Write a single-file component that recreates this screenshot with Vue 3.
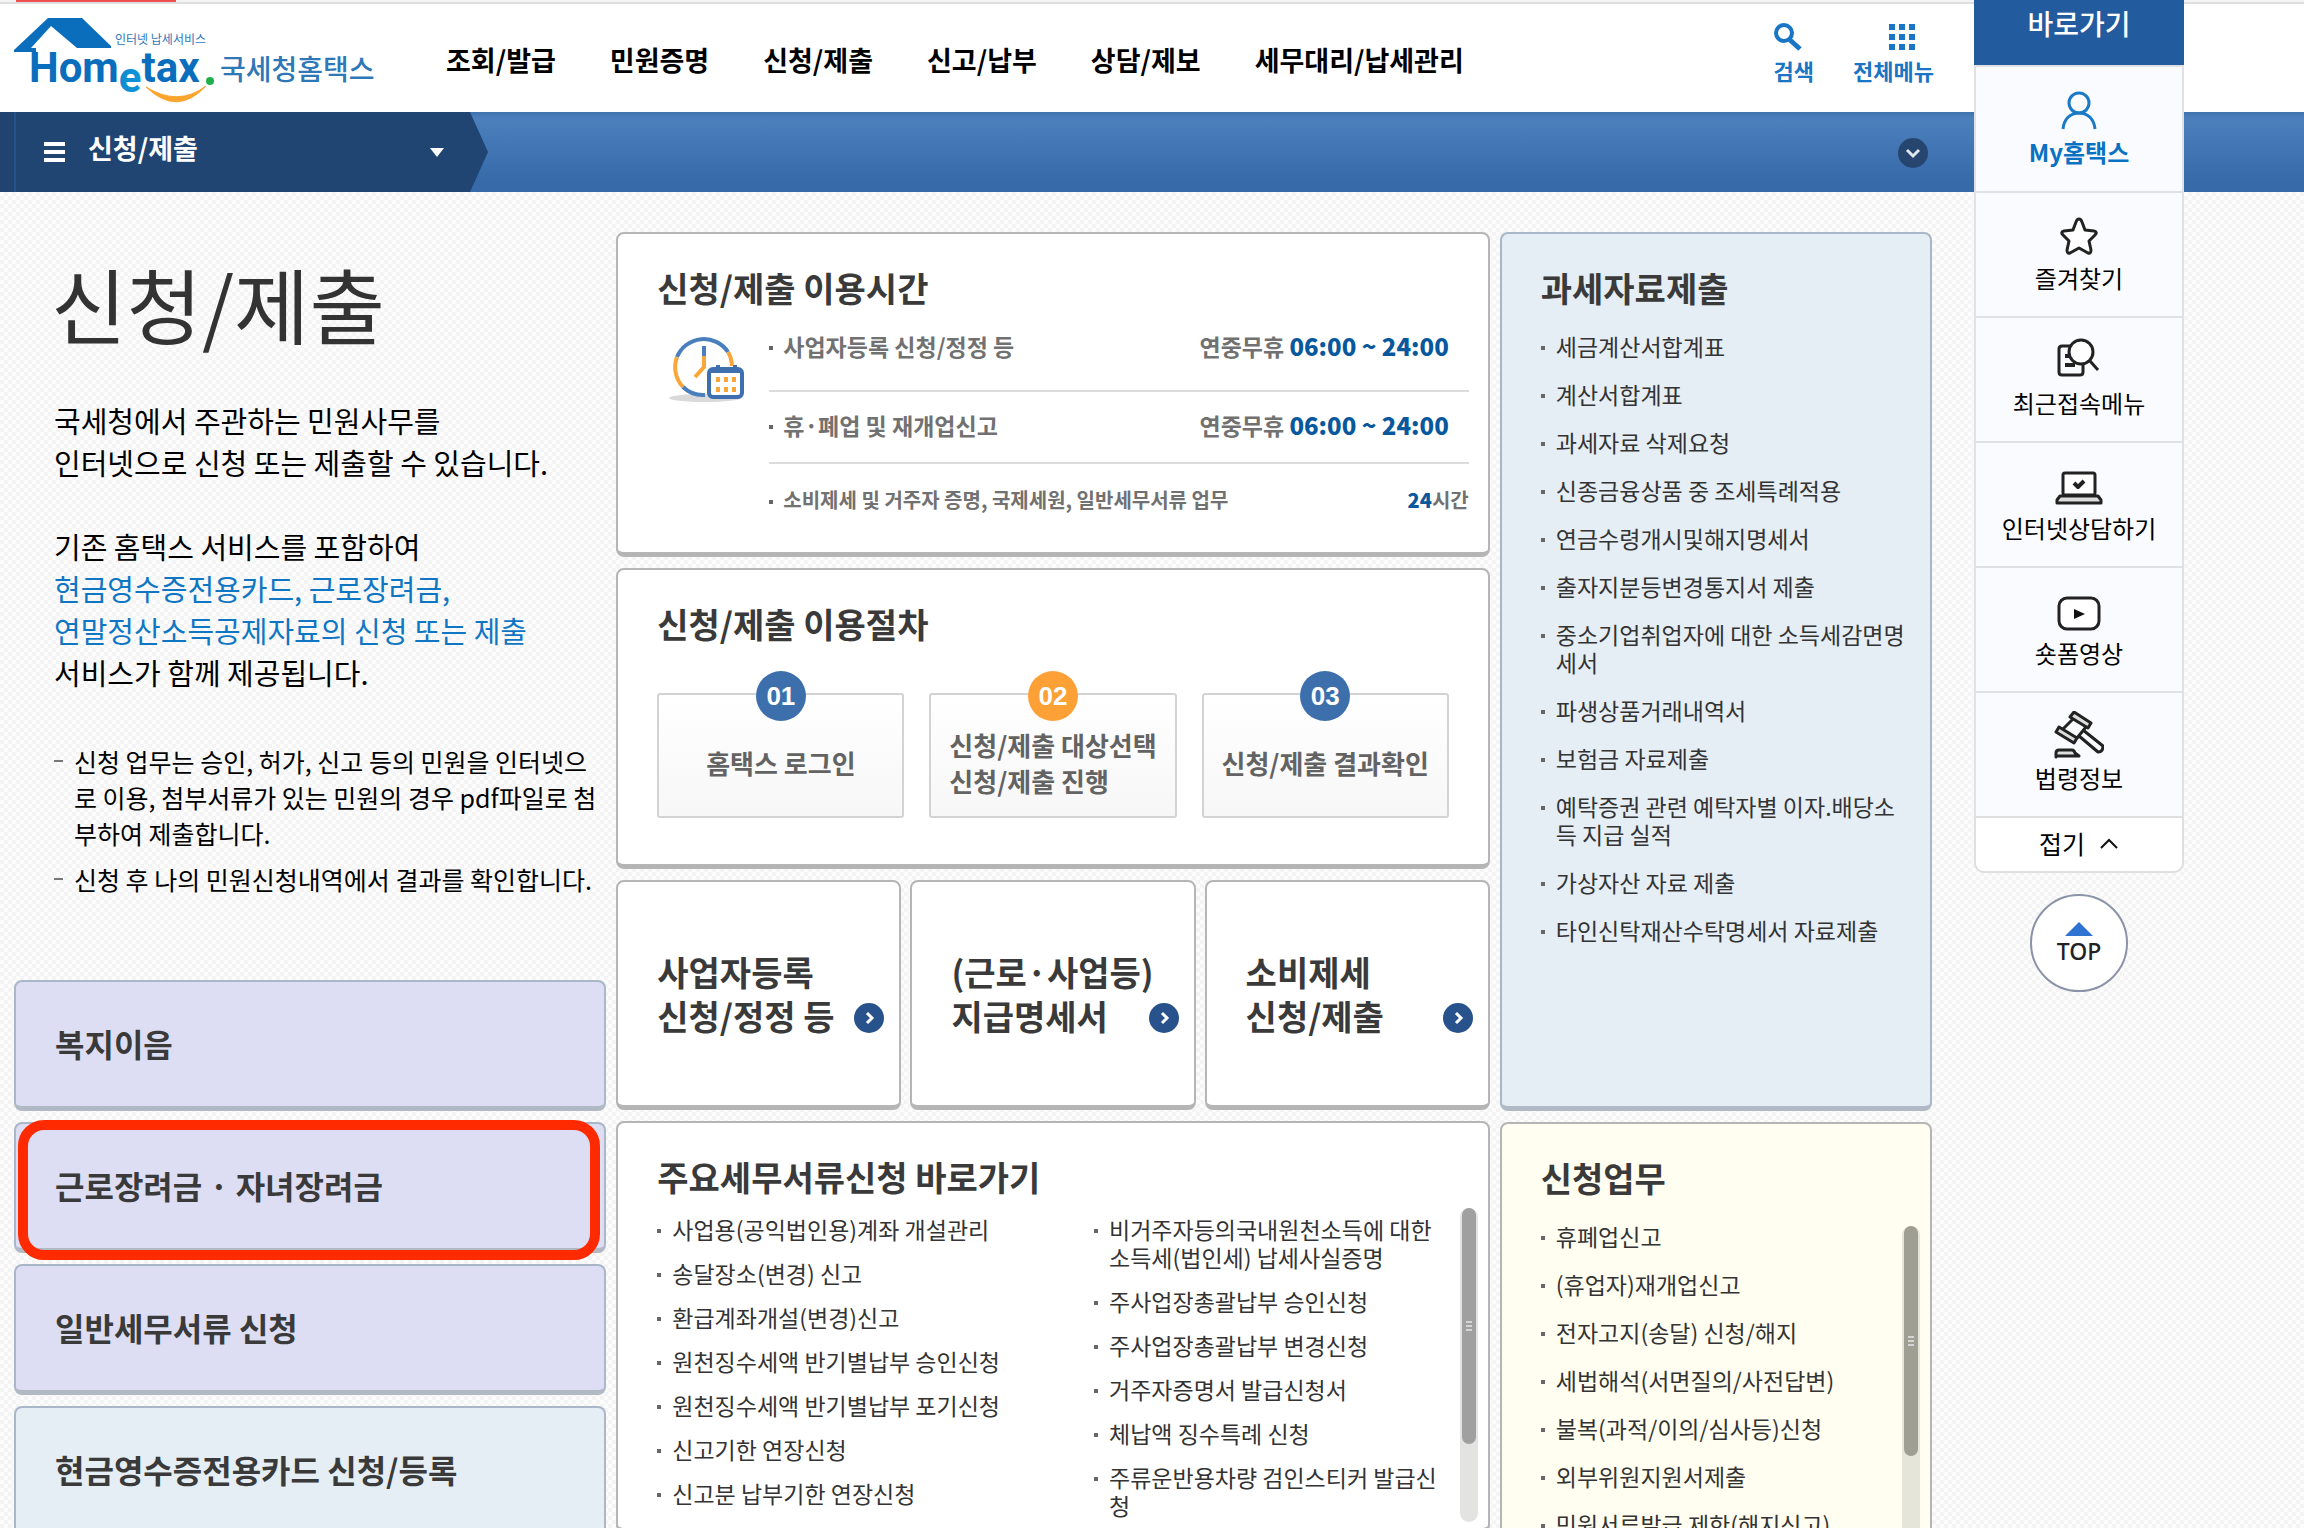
<script setup>
const nav = ['조회/발급', '민원증명', '신청/제출', '신고/납부', '상담/제보', '세무대리/납세관리']
const notes = [
  '신청 업무는 승인, 허가, 신고 등의 민원을 인터넷으로 이용, 첨부서류가 있는 민원의 경우 pdf파일로 첨부하여 제출합니다.',
  '신청 후 나의 민원신청내역에서 결과를 확인합니다.'
]
const shortcuts = [
  { label: '복지이음', tone: 'violet' },
  { label: '근로장려금 · 자녀장려금', tone: 'violet', marked: true },
  { label: '일반세무서류 신청', tone: 'violet' },
  { label: '현금영수증전용카드 신청/등록', tone: 'sky' }
]
const hours = [
  { name: '사업자등록 신청/정정 등', pre: '연중무휴 ', time: '06:00 ~ 24:00', post: '' },
  { name: '휴·폐업 및 재개업신고', pre: '연중무휴 ', time: '06:00 ~ 24:00', post: '' },
  { name: '소비제세 및 거주자 증명, 국제세원, 일반세무서류 업무', pre: '', time: '24', post: '시간', compact: true }
]
const steps = [
  { no: '01', lines: ['홈택스 로그인'] },
  { no: '02', lines: ['신청/제출 대상선택', '신청/제출 진행'], accent: true },
  { no: '03', lines: ['신청/제출 결과확인'] }
]
const tiles = [
  ['사업자등록', '신청/정정 등'],
  ['(근로·사업등)', '지급명세서'],
  ['소비제세', '신청/제출']
]
const docsLeft = ['사업용(공익법인용)계좌 개설관리', '송달장소(변경) 신고', '환급계좌개설(변경)신고', '원천징수세액 반기별납부 승인신청', '원천징수세액 반기별납부 포기신청', '신고기한 연장신청', '신고분 납부기한 연장신청']
const docsRight = ['비거주자등의국내원천소득에 대한 소득세(법인세) 납세사실증명', '주사업장총괄납부 승인신청', '주사업장총괄납부 변경신청', '거주자증명서 발급신청서', '체납액 징수특례 신청', '주류운반용차량 검인스티커 발급신청']
const taxData = ['세금계산서합계표', '계산서합계표', '과세자료 삭제요청', '신종금융상품 중 조세특례적용', '연금수령개시및해지명세서', '출자지분등변경통지서 제출', '중소기업취업자에 대한 소득세감면명세서', '파생상품거래내역서', '보험금 자료제출', '예탁증권 관련 예탁자별 이자.배당소득 지급 실적', '가상자산 자료 제출', '타인신탁재산수탁명세서 자료제출']
const tasks = ['휴폐업신고', '(휴업자)재개업신고', '전자고지(송달) 신청/해지', '세법해석(서면질의/사전답변)', '불복(과적/이의/심사등)신청', '외부위원지원서제출', '민원서류발급 제한(해지신고)']
</script>

<template>
  <div class="page">
    <div class="strip"><span class="strip-mark"></span></div>

    <header class="header">
      <a class="logo" href="#" aria-label="Hometax 국세청홈택스">
        <svg width="360" height="92" viewBox="14 16 360 92">
          <defs>
            <linearGradient id="e" x1="0" x2="1" y1="0" y2="0">
              <stop offset="0.2" stop-color="#0a6ebd" />
              <stop offset="1" stop-color="#12b5ee" />
            </linearGradient>
          </defs>
          <path d="M48 18H82L111 46V48H77L51 26L31 48H36V52H14V50Z" fill="#0a6ebd" />
          <text x="29" y="82" class="lg-main">Hom<tspan dy="10" fill="#1190d6">e</tspan><tspan dy="-10">tax</tspan></text>
          <circle cx="210" cy="81" r="4" fill="#1fb04c" />
          <path d="M146 87Q177 117 206 86Q178 107 146 87Z" fill="#fba52f" stroke="#fba52f" />
          <text x="115" y="44" class="lg-sub">인터넷 납세서비스</text>
          <text x="220" y="80" class="lg-ko">국세청홈택스</text>
        </svg>
      </a>
      <nav class="nav">
        <a v-for="n in nav" :key="n" href="#">{{ n }}</a>
      </nav>
      <div class="tools">
        <button type="button">
          <svg width="28" height="28" viewBox="0 0 28 28" fill="none" stroke="#1a75c4"><circle cx="10" cy="10" r="8" stroke-width="4" /><path d="M16 17L26 26" stroke-width="5" /></svg>
          <span>검색</span>
        </button>
        <button type="button" class="all">
          <svg width="28" height="28" viewBox="0 0 28 28" fill="#1a75c4"><path d="M1 1h6v6h-6zM11 1h6v6h-6zM21 1h6v6h-6zM1 11h6v6h-6zM11 11h6v6h-6zM21 11h6v6h-6zM1 21h6v6h-6zM11 21h6v6h-6zM21 21h6v6h-6z" /></svg>
          <span>전체메뉴</span>
        </button>
      </div>
    </header>

    <div class="bar">
      <button type="button" class="crumb">
        <svg width="22" height="24" viewBox="0 0 22 24" fill="#fff"><path d="M0 2h21v4H0zM0 10h21v4H0zM0 18h21v4H0z" /></svg>
        <span>신청/제출</span>
        <svg class="caret" width="16" height="10" viewBox="0 0 16 10" fill="#fff"><path d="M1 1H15L8 10Z" /></svg>
      </button>
      <button type="button" class="bar-toggle" aria-label="펼치기">
        <svg width="30" height="32" viewBox="0 0 30 32" fill="none"><circle cx="15" cy="17" r="15" fill="#27466f" /><path d="M9 14L15 20L21 14" stroke="#dfe6ee" stroke-width="3" /></svg>
      </button>
    </div>

    <main class="main">
      <section class="left">
        <div class="intro">
          <h1>신청/제출</h1>
          <p>국세청에서 주관하는 민원사무를<br />인터넷으로 신청 또는 제출할 수 있습니다.</p>
          <p>기존 홈택스 서비스를 포함하여<br /><em>현금영수증전용카드, 근로장려금,<br />연말정산소득공제자료의 신청 또는 제출</em><br />서비스가 함께 제공됩니다.</p>
          <ul class="notes">
            <li v-for="n in notes" :key="n">{{ n }}</li>
          </ul>
        </div>
        <a v-for="s in shortcuts" :key="s.label" href="#" class="card shortcut" :class="[s.tone, { marked: s.marked }]">{{ s.label }}</a>
      </section>

      <section class="middle">
        <div class="card">
          <h2>신청/제출 이용시간</h2>
          <div class="usage">
            <svg class="clock" width="80" height="70" viewBox="0 0 80 70" fill="none">
              <ellipse cx="38" cy="64" rx="36" ry="4" fill="#d9d9d9" />
              <circle cx="36" cy="32" r="28" fill="#fff" />
              <g stroke-width="4">
                <path d="M10 23A29 29 0 0 1 61 18" stroke="#4a7fbd" />
                <path d="M61 18A29 29 0 0 1 65 32" stroke="#fba63a" />
                <path d="M10 23A29 29 0 0 0 16 53" stroke="#fba63a" />
                <path d="M16 53A29 29 0 0 0 38 61" stroke="#4a7fbd" />
                <path d="M37 12V22" stroke="#4a7fbd" />
                <path d="M37 22V33L28 43" stroke="#fba63a" />
              </g>
              <rect x="42" y="35" width="33" height="28" rx="4" fill="#fff" stroke="#3e70b0" stroke-width="4" />
              <path d="M42 37H75M51 31V36M68 31V36" stroke="#3e70b0" stroke-width="4" />
              <path d="M49 43h4v5h-4zM57 43h4v5h-4zM65 43h4v5h-4zM49 53h4v5h-4zM57 53h4v5h-4zM65 53h4v5h-4z" fill="#fba63a" />
            </svg>
            <ul class="hours">
              <li v-for="h in hours" :key="h.name" :class="{ compact: h.compact }">
                <span class="name">{{ h.name }}</span>
                <span class="when">{{ h.pre }}<b>{{ h.time }}</b>{{ h.post }}</span>
              </li>
            </ul>
          </div>
        </div>

        <div class="card">
          <h2>신청/제출 이용절차</h2>
          <ol class="steps">
            <li v-for="s in steps" :key="s.no">
              <span class="no" :class="{ accent: s.accent }">{{ s.no }}</span>
              <span class="step-text"><template v-for="(l, i) in s.lines" :key="l"><br v-if="i" />{{ l }}</template></span>
            </li>
          </ol>
        </div>

        <div class="tiles">
          <a v-for="t in tiles" :key="t[0]" href="#" class="card tile">
            <span>{{ t[0] }}<br />{{ t[1] }}</span>
            <svg width="30" height="30" viewBox="0 0 30 30" fill="none"><circle cx="15" cy="15" r="15" fill="#28528c" /><path d="M13 10L18 15L13 20" stroke="#fff" stroke-width="3" /></svg>
          </a>
        </div>

        <div class="card docs">
          <h2>주요세무서류신청 바로가기</h2>
          <div class="scroller">
            <div class="cols">
              <ul class="links"><li v-for="d in docsLeft" :key="d"><a href="#">{{ d }}</a></li></ul>
              <ul class="links"><li v-for="d in docsRight" :key="d"><a href="#">{{ d }}</a></li></ul>
            </div>
            <div class="track"><div class="thumb"><i></i><i></i><i></i></div></div>
          </div>
        </div>
      </section>

      <section class="right">
        <div class="card data">
          <h2>과세자료제출</h2>
          <ul class="links"><li v-for="d in taxData" :key="d"><a href="#">{{ d }}</a></li></ul>
        </div>
        <div class="card tasks">
          <h2>신청업무</h2>
          <div class="scroller">
            <ul class="links"><li v-for="d in tasks" :key="d"><a href="#">{{ d }}</a></li></ul>
            <div class="track"><div class="thumb"><i></i><i></i><i></i></div></div>
          </div>
        </div>
      </section>
    </main>

    <aside class="quick">
      <div class="quick-title">바로가기</div>
      <a href="#" class="quick-item my">
        <svg width="50" height="50" viewBox="0 0 50 50"><circle cx="25" cy="18" r="10" /><path d="M9 44C10 34 16 28 25 28S40 34 41 44" /></svg>
        <span>My홈택스</span>
      </a>
      <a href="#" class="quick-item">
        <svg width="50" height="50" viewBox="0 0 50 50"><path d="M25 8Q27 8 28 11L31 19L40 20Q44 21 41 24L35 30L37 39Q37 43 34 42L25 37L16 42Q13 43 13 39L15 30L9 24Q6 21 10 20L19 19L22 11Q23 8 25 8Z" fill="#fff" /></svg>
        <span>즐겨찾기</span>
      </a>
      <a href="#" class="quick-item">
        <svg width="50" height="50" viewBox="0 0 50 50"><path d="M17 10H8Q5 10 5 13V36Q5 39 8 39H26Q29 39 29 36V28" /><path d="M11 20H16M11 29H21" stroke-width="4" /><circle cx="27" cy="16" r="12" fill="#fff" /><path d="M36 25L44 34" /></svg>
        <span>최근접속메뉴</span>
      </a>
      <a href="#" class="quick-item">
        <svg width="50" height="50" viewBox="0 0 50 50"><rect x="9" y="12" width="32" height="22" rx="2" fill="#fff" /><path d="M6 35H44L47 39V42H3V39Z" fill="#ddd" /><path d="M20 22L24 26L30 20" stroke-width="4" /></svg>
        <span>인터넷상담하기</span>
      </a>
      <a href="#" class="quick-item">
        <svg width="50" height="50" viewBox="0 0 50 50"><rect x="5" y="12" width="40" height="31" rx="8" fill="#fff" /><path d="M20 23V33L31 28Z" fill="#111" stroke="none" /></svg>
        <span>숏폼영상</span>
      </a>
      <a href="#" class="quick-item">
        <svg width="50" height="50" viewBox="0 0 50 50"><path d="M20 1L37 12L34 17L16 6Z" fill="#ddd" /><path d="M5 16L23 27L20 32L2 21Z" fill="#ddd" /><path d="M19 8L9 18M32 16L23 27" /><path d="M29 19L49 35Q49 41 44 41L25 25" /><path d="M2 46V42Q2 39 5 39H18Q20 39 21 42L25 45H2Z" fill="#ddd" /></svg>
        <span>법령정보</span>
      </a>
      <button type="button" class="fold">접기 <svg width="20" height="12" viewBox="0 0 20 12" fill="none" stroke="#111" stroke-width="2"><path d="M2 11L10 3L18 11" /></svg></button>
      <a href="#" class="top">
        <svg width="28" height="14" viewBox="0 0 28 14" fill="#2e73d2"><path d="M0 14L14 0L28 14Z" /></svg>
        TOP
      </a>
    </aside>
  </div>
</template>

<style>
body {
  margin: 0;
}
</style>

<style scoped>
.page {
  position: relative;
  height: 100vh;
  overflow: hidden;
  font-family: "Noto Sans CJK KR", "Noto Sans", sans-serif;
  color: #000;
  background: repeating-conic-gradient(#f4f4f4 0 25%, #fcfcfc 0 50%) 0 0 / 8px 8px;
}
.page * {
  box-sizing: border-box;
}
a {
  color: inherit;
  text-decoration: none;
}
button {
  font: inherit;
  color: inherit;
  background: none;
  border: 0;
  padding: 0;
}
ul,
ol {
  list-style: none;
  margin: 0;
  padding: 0;
}
h1,
h2,
p {
  margin: 0;
}
svg {
  display: block;
  flex: none;
}

.strip {
  height: 4px;
  background: #f4f4f4;
  border-bottom: 2px solid #dedede;
}
.strip-mark {
  display: block;
  width: 160px;
  height: 2px;
  margin-left: 16px;
  background: #f0504f;
}

.header {
  display: flex;
  height: 108px;
  padding: 0 370px 0 14px;
  background: #fff;
}
.logo {
  padding-top: 12px;
}
.lg-main {
  font: bold 42px Roboto, "Liberation Sans", sans-serif;
  fill: #0a6ebd;
}
.lg-main tspan[fill] {
  fill: url(#e);
}
.lg-sub {
  font-size: 12px;
  fill: #2f78b8;
}
.lg-ko {
  font-size: 28px;
  font-weight: 500;
  fill: #2f78b8;
}
.nav {
  display: flex;
  gap: 54px;
  margin-left: 72px;
  padding-top: 36px;
  font-size: 27px;
  line-height: 40px;
  font-weight: 700;
}
.tools {
  display: flex;
  gap: 39px;
  margin-left: auto;
  padding-top: 19px;
  font-size: 22px;
  line-height: 32px;
  font-weight: 700;
  color: #1a75c4;
}
.tools button {
  display: flex;
  flex-direction: column;
  align-items: flex-start;
  gap: 3px;
  height: 64px;
}
.tools .all svg {
  margin-left: 35px;
}

.bar {
  display: flex;
  align-items: center;
  justify-content: space-between;
  height: 80px;
  padding-right: 376px;
  background: linear-gradient(#3f73ad, #4b80bd 8%, #376aa9 85%);
}
.crumb {
  display: flex;
  align-items: center;
  width: 488px;
  height: 80px;
  padding: 0 43px 0 44px;
  background: linear-gradient(90deg, #20446f 14px, #24528a 14px 16px, #204572 16px);
  clip-path: polygon(0 0, 470px 0, 100% 50%, 470px 100%, 0 100%);
  color: #fff;
  font-size: 27px;
  line-height: 40px;
  font-weight: 700;
}
.crumb span {
  margin: 0 auto 8px 22px;
}

.main {
  display: grid;
  grid-template-columns: 592fr 873fr 432fr;
  gap: 10px;
  padding: 40px 372px 0 14px;
}
.left,
.middle,
.right {
  display: flex;
  flex-direction: column;
  gap: 11px;
  min-width: 0;
}

.card {
  border: 2px solid #b5b5b5;
  border-bottom-width: 5px;
  border-radius: 8px;
  background: #fff;
  padding: 32px 39px 0;
}
h2 {
  font-size: 34px;
  line-height: 44px;
  font-weight: 700;
  color: #3a3a3a;
}

.intro {
  height: 737px;
  padding: 14px 0 0 40px;
}
h1 {
  font-size: 82px;
  line-height: 114px;
  font-weight: 400;
  color: #333;
  margin: 0 0 39px -3px;
}
.intro p {
  font-size: 29px;
  line-height: 42px;
  margin-bottom: 42px;
}
em {
  font-style: normal;
  color: #0f76c4;
}
.notes {
  padding-top: 8px;
  font-size: 25px;
  line-height: 36px;
}
.notes li {
  position: relative;
  padding-left: 20px;
  margin-bottom: 10px;
  word-break: break-all;
}
.notes li::before {
  content: "";
  position: absolute;
  left: 0;
  top: 17px;
  width: 9px;
  height: 2px;
  background: #777;
}

.shortcut {
  display: flex;
  align-items: center;
  position: relative;
  height: 131px;
  padding: 0 39px 2px;
  font-size: 32px;
  line-height: 44px;
  font-weight: 700;
  color: #3a3a3a;
}
.violet,
.sky,
.data {
  background: #dddef3;
  border-color: #a9b7c8;
  border-bottom-color: #b1b9c4;
}
.sky,
.data {
  background: #e5edf5;
}
.marked::after {
  content: "";
  position: absolute;
  inset: -4px 4px -12px 2px;
  border: 10px solid #ff2a00;
  border-radius: 26px;
}

.usage {
  display: flex;
  padding: 22px 0 38px;
}
.clock {
  margin: 2px 0 0 10px;
}
.hours {
  flex: 1;
  margin: 0 -20px 0 22px;
  font-size: 23px;
  line-height: 28px;
  font-weight: 700;
  color: #717171;
}
.hours li {
  display: flex;
  justify-content: space-between;
  position: relative;
  padding: 19px 20px 23px 14px;
  border-bottom: 2px solid #dcdcdc;
}
.hours li:first-child {
  padding-top: 0;
  padding-bottom: 30px;
}
.hours li:last-child {
  padding-top: 22px;
  padding-right: 0;
  padding-bottom: 0;
  border: 0;
}
.hours .compact {
  font-size: 20px;
}
.hours b {
  color: #07589c;
}
.hours li:not(.compact) b {
  font-size: 24px;
}
.name::before,
.links li::before {
  content: "";
  position: absolute;
  left: 0;
  width: 4px;
  height: 4px;
  margin-top: 14px;
  background: #666;
}

.steps {
  display: flex;
  gap: 25px;
  padding: 47px 0 46px;
}
.steps li {
  position: relative;
  flex: 1;
  display: flex;
  align-items: center;
  justify-content: center;
  height: 125px;
  padding-top: 15px;
  border: 2px solid #d3d3d3;
  border-radius: 3px;
  background: linear-gradient(#fff, #f7f7f7);
}
.step-text {
  font-size: 26px;
  line-height: 36px;
  font-weight: 700;
  color: #636363;
}
.no {
  position: absolute;
  top: -24px;
  left: calc(50% - 25px);
  width: 50px;
  height: 50px;
  border-radius: 50%;
  background: #3d6fad;
  color: #fff;
  font: bold 26px/50px "Liberation Sans", sans-serif;
  text-align: center;
}
.no.accent {
  background: #fda137;
}

.tiles {
  display: flex;
  gap: 9px;
}
.tile {
  flex: 1;
  display: flex;
  align-items: flex-end;
  justify-content: space-between;
  height: 230px;
  padding: 0 15px 67px 39px;
  font-size: 34px;
  line-height: 44px;
  font-weight: 700;
  color: #3a3a3a;
}
.tile span {
  white-space: nowrap;
}
.tile svg {
  margin: 0 0 5px -20px;
}

.links {
  font-size: 23px;
  line-height: 28px;
  color: #333;
}
.links li {
  position: relative;
  padding-left: 15px;
  margin-bottom: 20px;
  word-break: break-all;
}
.scroller {
  display: flex;
  justify-content: space-between;
}
.track {
  width: 18px;
  height: 314px;
  padding: 0 2px;
  border-radius: 9px;
  background: #e3e3e1;
}
.thumb {
  display: flex;
  flex-direction: column;
  align-items: center;
  justify-content: center;
  gap: 2px;
  height: 236px;
  border-radius: 7px;
  background: #a0a0a0;
}
.thumb i {
  width: 6px;
  height: 2px;
  background: #d5d5d5;
}

.docs {
  height: 412px;
  padding-right: 10px;
}
.docs .scroller {
  margin-top: 9px;
}
.cols {
  flex: 1;
  display: grid;
  grid-template-columns: 437fr 361fr;
  padding: 7px 5px 0 0;
}
.docs .links li {
  margin-bottom: 16px;
}

.data {
  height: 879px;
  padding-right: 18px;
}
.data .links {
  margin-top: 22px;
}
.tasks {
  height: 520px;
  padding-right: 10px;
  background: #fffef1;
}
.tasks .links {
  margin-top: -4px;
}
.tasks .scroller {
  margin-top: 26px;
}
.tasks .track {
  height: 400px;
  background: #e6e5d9;
}
.tasks .thumb {
  height: 230px;
  background: #9f9f94;
}

.quick {
  position: absolute;
  top: 0;
  right: 120px;
  width: 210px;
  text-align: center;
}
.quick-title {
  height: 65px;
  padding-top: 3px;
  background: #235b9f;
  color: #fff;
  font-size: 28px;
  line-height: 40px;
  font-weight: 500;
}
.quick-item {
  display: flex;
  flex-direction: column;
  align-items: center;
  gap: 1px;
  height: 126px;
  padding-top: 18px;
  background: #fafbfe;
  border: 2px solid #e0e1e5;
  border-bottom: 0;
  font-size: 24px;
  line-height: 32px;
}
.quick-item + .quick-item {
  height: 125px;
}
.quick-item svg {
  fill: none;
  stroke: #222;
  stroke-width: 3;
  stroke-linejoin: round;
}
.my {
  font-weight: 700;
  color: #0a72c2;
}
.my svg {
  stroke: #1a7ac8;
}
.fold {
  display: flex;
  align-items: center;
  justify-content: center;
  gap: 14px;
  width: 100%;
  height: 57px;
  padding-bottom: 3px;
  border: 2px solid #dfdfe1;
  border-radius: 0 0 10px 10px;
  background: #fff;
  font-size: 25px;
  line-height: 36px;
}
.top {
  display: flex;
  flex-direction: column;
  align-items: center;
  gap: 1px;
  width: 98px;
  height: 98px;
  margin: 21px auto 0;
  padding-top: 26px;
  border: 2px solid #8c93a8;
  border-radius: 50%;
  background: #fff;
  font: 500 23px/28px "Noto Sans", sans-serif;
  color: #222;
}
</style>
